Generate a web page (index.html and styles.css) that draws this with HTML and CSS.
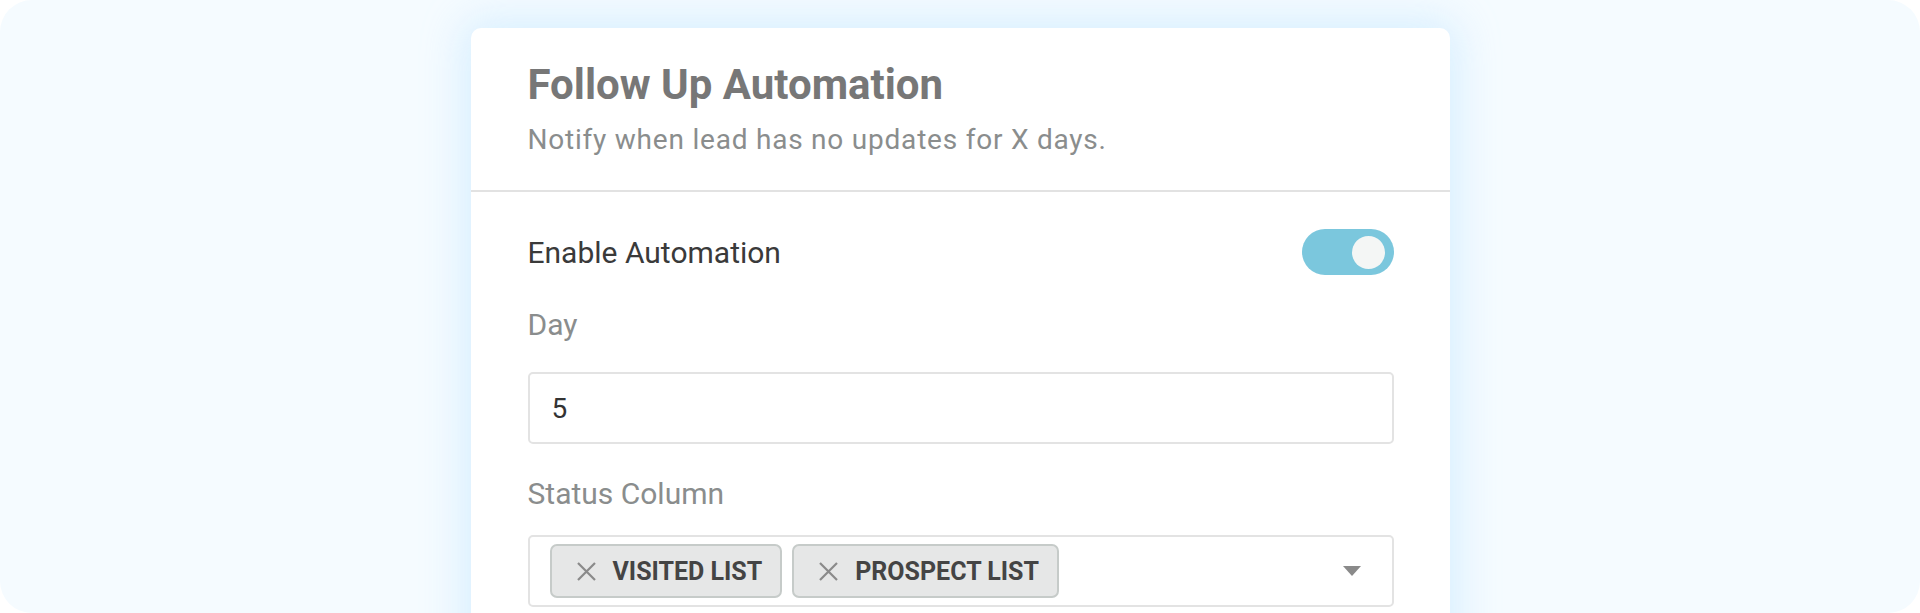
FILE: index.html
```html
<!DOCTYPE html>
<html lang="en">
<head>
<meta charset="utf-8">
<title>Follow Up Automation</title>
<link rel="stylesheet" href="styles.css">
</head>
<body>
<div class="frame">
  <section class="card">
    <header class="card-header">
      <h1 class="title">Follow Up Automation</h1>
      <p class="subtitle">Notify when lead has no updates for X days.</p>
    </header>
    <div class="card-body">
      <div class="toggle-row">
        <span class="toggle-label">Enable Automation</span>
        <span class="toggle"><span class="knob"></span></span>
      </div>
      <label class="field-label day-label">Day</label>
      <div class="input">5</div>
      <label class="field-label status-label">Status Column</label>
      <div class="select">
        <span class="chip">
          <svg class="chip-x" viewBox="0 0 21 21" width="21" height="21"><path d="M2 2 L19 19 M19 2 L2 19" stroke="#8a8a8a" stroke-width="2.2" fill="none"/></svg>
          <span class="chip-text">VISITED LIST</span>
        </span>
        <span class="chip">
          <svg class="chip-x" viewBox="0 0 21 21" width="21" height="21"><path d="M2 2 L19 19 M19 2 L2 19" stroke="#8a8a8a" stroke-width="2.2" fill="none"/></svg>
          <span class="chip-text">PROSPECT LIST</span>
        </span>
        <span class="spacer"></span>
        <svg class="caret" viewBox="0 0 18 10" width="18" height="10"><path d="M0 0 L18 0 L9 10 Z" fill="#8a8a8a"/></svg>
      </div>
    </div>
  </section>
</div>
</body>
</html>
```
FILE: styles.css
```css
html, body {
  margin: 0;
  padding: 0;
  background: #ffffff;
  overflow: hidden;
  font-family: Roboto, "Liberation Sans", sans-serif;
}

.frame {
  height: 613px;
  box-sizing: border-box;
  padding-top: 28px;
  border-radius: 32px;
  background: #f5fbff;
  overflow: hidden;
  display: flex;
  justify-content: center;
  align-items: flex-start;
}

.card {
  width: 979px;
  min-height: 640px;
  flex: none;
  background: #ffffff;
  border-radius: 10px 10px 0 0;
  box-shadow: 0 0 40px 8px rgba(205, 235, 255, 0.75);
}

.card-header {
  padding: 32px 56px 34px 57px;
  border-bottom: 2px solid #e2e2e2;
}

.title {
  margin: 0;
  font-size: 42px;
  font-weight: 700;
  line-height: normal;
  color: #777777;
}

.subtitle {
  margin: 14px 0 0;
  font-size: 28px;
  font-weight: 400;
  letter-spacing: 0.78px;
  line-height: normal;
  color: #8a8d8d;
}

.card-body {
  padding: 37px 56px 0 57px;
  display: flex;
  flex-direction: column;
}

.toggle-row {
  display: flex;
  align-items: center;
  justify-content: space-between;
  height: 46px;
}

.toggle-label {
  font-size: 30px;
  color: #3a3a3a;
}

.toggle {
  width: 92px;
  height: 46px;
  border-radius: 23px;
  background: #7bc7dd;
  display: flex;
  align-items: center;
  justify-content: flex-end;
  padding-right: 9px;
  box-sizing: border-box;
}

.knob {
  width: 33px;
  height: 33px;
  border-radius: 50%;
  background: #f4f6f5;
}

.field-label {
  font-size: 30px;
  line-height: normal;
  color: #8a8d8d;
}

.day-label {
  margin-top: 32px;
}

.status-label {
  margin-top: 32px;
}

.input {
  margin-top: 30px;
  height: 72px;
  box-sizing: border-box;
  border: 2px solid #e3e3e3;
  border-radius: 5px;
  padding-left: 22px;
  display: flex;
  align-items: center;
  font-size: 28px;
  color: #333333;
}

.select {
  margin-top: 24px;
  height: 72px;
  box-sizing: border-box;
  border: 2px solid #e3e3e3;
  border-radius: 5px;
  padding: 0 31px 0 20px;
  display: flex;
  align-items: center;
  gap: 10px;
}

.chip {
  height: 54px;
  box-sizing: border-box;
  display: flex;
  align-items: center;
  padding: 0 18px 0 24px;
  gap: 16px;
  background: #e6e7e7;
  border: 2px solid #c6cbc9;
  border-radius: 7px;
}

.chip-x {
  display: block;
  flex: none;
}

.chip-text {
  font-size: 25px;
  font-weight: 700;
  color: #444444;
  white-space: nowrap;
}

.spacer {
  flex: 1;
}

.caret {
  display: block;
  flex: none;
}
```
